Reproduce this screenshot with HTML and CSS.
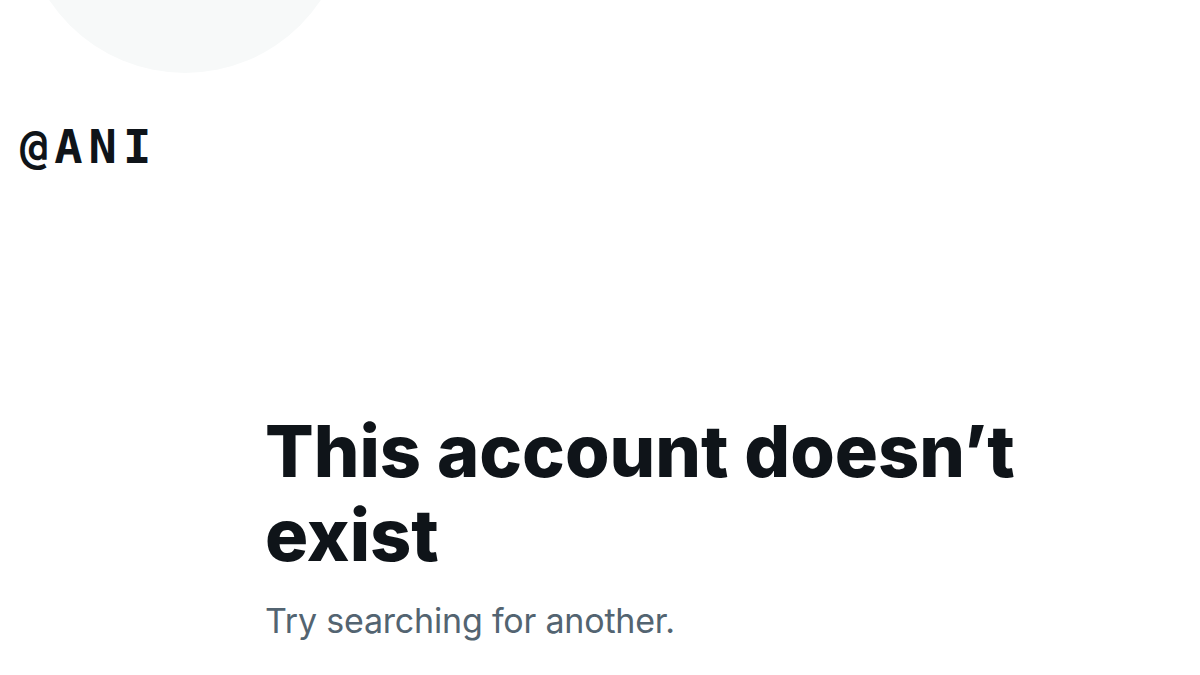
FILE: index.html
```html
<!DOCTYPE html>
<html>
<head>
<meta charset="utf-8">
<link rel="stylesheet" href="styles.css">
</head>
<body>
<div class="page">
  <div class="avatar"></div>
  <div class="handle">@ANI</div>
  <div class="empty">
    <h1 class="title">This account doesn’t exist</h1>
    <p class="sub">Try searching for another.</p>
  </div>
</div>
</body>
</html>
```
FILE: styles.css
```css
html, body {
  margin: 0;
  padding: 0;
  background: #ffffff;
}
.page {
  width: 1200px;
  height: 675px;
  overflow: hidden;
  position: relative;
}
.avatar {
  width: 326px;
  height: 326px;
  border-radius: 50%;
  background: #f7f9f9;
  margin-left: 22px;
  margin-top: -253px;
}
.handle {
  margin-top: 48px;
  margin-left: 20px;
  font-family: "DejaVu Sans Mono", monospace;
  font-weight: bold;
  font-size: 47px;
  line-height: 52px;
  color: #0f1419;
  letter-spacing: 6px;
}
.empty {
  margin-top: 0;
  padding-left: 265px;
  width: 820px;
}
.title {
  margin: 236px 0 0 0;
  font-family: Inter, "Liberation Sans", sans-serif;
  font-weight: 800;
  font-size: 72px;
  line-height: 84px;
  color: #0f1419;
  letter-spacing: 0;
}
.sub {
  margin: 24px 0 0 0;
  font-family: Inter, "Liberation Sans", sans-serif;
  font-size: 34px;
  line-height: 40px;
  color: #536471;
  letter-spacing: -0.2px;
}
```
